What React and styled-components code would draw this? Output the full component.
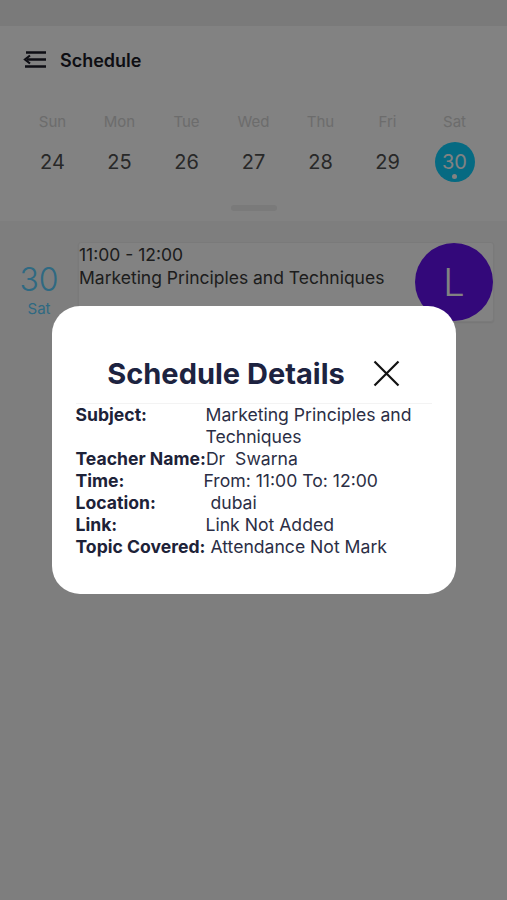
import React from "react";
import styled, { createGlobalStyle } from "styled-components";

const GlobalStyle = createGlobalStyle`
  body {
    margin: 0;
    background: #f8f8f8;
    font-family: Inter, "Noto Sans", sans-serif;
  }
`;

const days = [
  { name: "Sun", num: 24 },
  { name: "Mon", num: 25 },
  { name: "Tue", num: 26 },
  { name: "Wed", num: 27 },
  { name: "Thu", num: 28 },
  { name: "Fri", num: 29 },
  { name: "Sat", num: 30, active: true },
];

const details = [
  { label: "Subject:", value: "Marketing Principles and Techniques" },
  { label: "Teacher Name:", value: "Dr  Swarna" },
  { label: "Time:", value: "From: 11:00 To: 12:00", shift: -2 },
  { label: "Location:", value: " dubai" },
  { label: "Link:", value: "Link Not Added" },
  { label: "Topic Covered:", value: " Attendance Not Mark" },
];

function MenuFoldIcon() {
  return (
    <svg width="24" height="20" viewBox="0 0 24 20" fill="none">
      <path d="M3 2.5h20M4 9.5h19M2 16.5h21" stroke="#1c1c28" strokeWidth="2.6" />
      <path d="M7 5.5L2 9.5l5 4" stroke="#1c1c28" strokeWidth="2.2" fill="none" />
    </svg>
  );
}

function CloseIcon() {
  return (
    <svg width="27" height="27" viewBox="0 0 27 27">
      <path d="M1.5 1.5l24 24M25.5 1.5l-24 24" stroke="#111" strokeWidth="2.2" />
    </svg>
  );
}

export default function App() {
  return (
    <Page>
      <GlobalStyle />
      <StatusBar />
      <Header>
        <TitleRow>
          <MenuFoldIcon />
          <PageTitle>Schedule</PageTitle>
        </TitleRow>
        <Week>
          {days.map((d) => (
            <DayName key={d.name}>{d.name}</DayName>
          ))}
          {days.map((d) => (
            <DayCell key={d.num}>
              <DayNum $active={d.active}>
                {d.num}
                {d.active && <Dot />}
              </DayNum>
            </DayCell>
          ))}
        </Week>
        <Handle />
      </Header>

      <Agenda>
        <DateCol>
          <DateNum>30</DateNum>
          <DateDay>Sat</DateDay>
        </DateCol>
        <EventCard>
          <EventText>
            <div>11:00 - 12:00</div>
            <div>Marketing Principles and Techniques</div>
          </EventText>
          <Avatar>L</Avatar>
        </EventCard>
      </Agenda>

      <Backdrop>
        <Modal>
          <ModalHead>
            <ModalTitle>Schedule Details</ModalTitle>
            <CloseIcon />
          </ModalHead>
          <Divider />
          {details.map((row) => (
            <DetailRow key={row.label}>
              <Label>{row.label}</Label>
              <Value style={row.shift ? { marginLeft: row.shift } : undefined}>
                {row.value}
              </Value>
            </DetailRow>
          ))}
        </Modal>
      </Backdrop>
    </Page>
  );
}

const Page = styled.div`
  min-height: 900px;
  background: #f8f8f8;
`;

const StatusBar = styled.div`
  height: 26px;
  background: #efefef;
`;

const Header = styled.header`
  background: #ffffff;
  padding: 22px 0 10px;
  display: flex;
  flex-direction: column;
  align-items: center;
`;

const TitleRow = styled.div`
  align-self: stretch;
  display: flex;
  align-items: center;
  gap: 13px;
  height: 24px;
  padding-left: 23px;
`;

const PageTitle = styled.h1`
  margin: 0;
  font-size: 18px;
  font-weight: 600;
  color: #1c1c28;
`;

const Week = styled.div`
  align-self: stretch;
  display: grid;
  grid-template-columns: repeat(7, 1fr);
  row-gap: 10px;
  padding: 40px 19px 0;
`;

const DayName = styled.div`
  text-align: center;
  font-size: 15px;
  line-height: 20px;
  color: #d4d4d4;
`;

const DayCell = styled.div`
  display: flex;
  justify-content: center;
`;

const DayNum = styled.div`
  position: relative;
  width: 40px;
  height: 40px;
  border-radius: 50%;
  display: flex;
  align-items: center;
  justify-content: center;
  font-size: 20px;
  color: ${(p) => (p.$active ? "#ffffff" : "#505050")};
  background: ${(p) => (p.$active ? "#0cd0ff" : "transparent")};
`;

const Dot = styled.span`
  position: absolute;
  bottom: 3px;
  left: 50%;
  width: 5px;
  height: 5px;
  margin-left: -2.5px;
  border-radius: 50%;
  background: #ffffff;
`;

const Handle = styled.div`
  margin-top: 23px;
  width: 46px;
  height: 6px;
  border-radius: 3px;
  background: #efefef;
`;

const Agenda = styled.section`
  display: flex;
  gap: 14px;
  padding: 21px 13px 0 14px;
`;

const DateCol = styled.div`
  width: 50px;
  display: flex;
  flex-direction: column;
  align-items: center;
  padding-top: 18px;
  color: #5ccfff;
`;

const DateNum = styled.div`
  font-size: 32px;
  font-weight: 300;
  line-height: 39px;
`;

const DateDay = styled.div`
  font-size: 15px;
  line-height: 19px;
`;

const EventCard = styled.div`
  flex: 1;
  display: flex;
  justify-content: space-between;
  background: #ffffff;
  border: 1px solid #f0f0f0;
  border-radius: 3px;
  box-shadow: 0 1px 2px rgba(0, 0, 0, 0.08);
`;

const EventText = styled.div`
  font-size: 17.5px;
  line-height: 23px;
  color: #3a3a3a;
`;

const Avatar = styled.div`
  width: 78px;
  height: 78px;
  border-radius: 50%;
  background: #6410f0;
  color: #ffffff;
  display: flex;
  align-items: center;
  justify-content: center;
  font-size: 38px;
  font-weight: 300;
`;

const Backdrop = styled.div`
  position: fixed;
  inset: 0;
  background: rgba(0, 0, 0, 0.49);
  display: flex;
  align-items: center;
  justify-content: center;
`;

const Modal = styled.div`
  width: 404px;
  box-sizing: border-box;
  background: #ffffff;
  border-radius: 28px;
  padding: 50px 24px 36px;
`;

const ModalHead = styled.div`
  display: flex;
  align-items: center;
  justify-content: center;
  gap: 28px;
  height: 34px;
`;

const ModalTitle = styled.h2`
  margin: 0;
  font-size: 29px;
  font-weight: 700;
  color: #1d2340;
`;

const Divider = styled.div`
  height: 1px;
  margin-top: 13px;
  background: #f3f3f3;
`;

const DetailRow = styled.div`
  display: flex;
  font-size: 17.6px;
  line-height: 22px;
`;

const Label = styled.div`
  flex: none;
  min-width: 130px;
  font-weight: 700;
  color: #1d2238;
`;

const Value = styled.div`
  white-space: pre-wrap;
  color: #2b2e45;
`;
